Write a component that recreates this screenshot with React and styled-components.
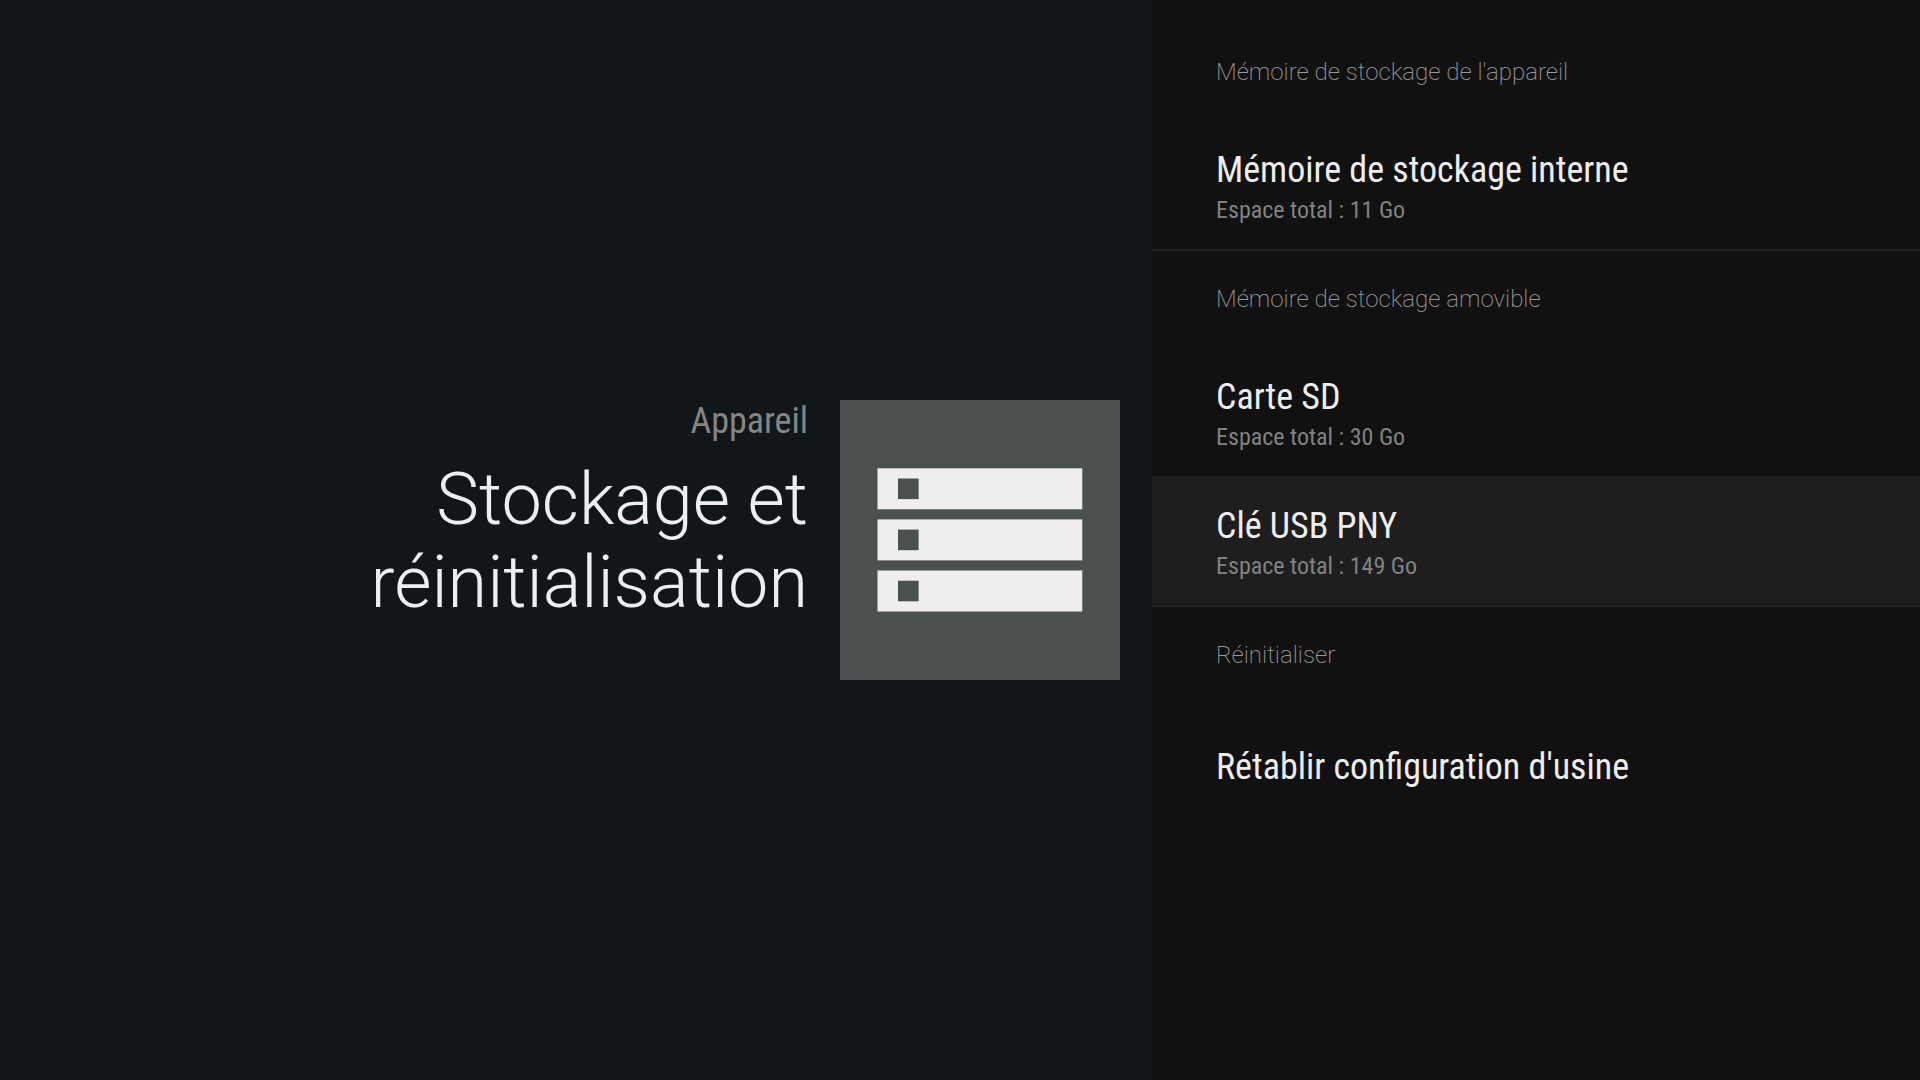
import React from "react";
import styled, { createGlobalStyle } from "styled-components";

const Global = createGlobalStyle`
  * { box-sizing: border-box; }
  body { margin: 0; background: #111719; font-family: Roboto, sans-serif; }
`;

const Screen = styled.main`
  display: grid;
  grid-template-columns: 3fr 2fr;
  min-height: 100vh;
`;

const Guidance = styled.section`
  display: flex;
  align-items: center;
  justify-content: flex-end;
  padding: 0 32px;
  background: #111719;
`;

const Summary = styled.div`
  display: flex;
  align-items: flex-start;
  gap: 32px;
`;

const Heading = styled.div`
  display: flex;
  flex-direction: column;
  align-items: flex-end;
  gap: 16px;
  max-width: 480px;
  text-align: right;
`;

const Breadcrumb = styled.p`
  margin: 0;
  color: #848686;
  font: 400 36px/42px "Roboto Condensed", Roboto, sans-serif;
`;

const Title = styled.h1`
  margin: 0;
  color: #eeeeee;
  font-size: 72px;
  font-weight: 300;
  line-height: 83px;
`;

const IconTile = styled.div`
  display: flex;
  flex: none;
  background: #4b5050;
`;

const Panel = styled.nav`
  padding-top: 24px;
  background: #111111;
`;

const Group = styled.section`
  display: flex;
  flex-direction: column;
  gap: 1px;
  padding-bottom: 1px;
  border-bottom: 2px solid ${(p) => (p.$last ? "transparent" : "#262626")};
`;

const GroupTitle = styled.h2`
  margin: 0;
  padding: 2px 64px 0;
  color: #999999;
  font-size: 24px;
  font-weight: 200;
  line-height: 93px;
`;

const Row = styled.button`
  display: flex;
  flex-direction: column;
  justify-content: center;
  width: 100%;
  height: 128px;
  padding: 0 64px;
  border: 0;
  background: ${(p) => (p.$focused ? "#1e1e1e" : "transparent")};
  text-align: left;
`;

const RowTitle = styled.span`
  color: #eeeeee;
  font: 400 36px/52px "Roboto Condensed", Roboto, sans-serif;
`;

const RowNote = styled.span`
  color: #828282;
  font: 400 24px/28px "Roboto Condensed", Roboto, sans-serif;
`;

const groups = [
  {
    title: "Mémoire de stockage de l'appareil",
    rows: [{ title: "Mémoire de stockage interne", note: "Espace total : 11 Go" }],
  },
  {
    title: "Mémoire de stockage amovible",
    rows: [
      { title: "Carte SD", note: "Espace total : 30 Go" },
      { title: "Clé USB PNY", note: "Espace total : 149 Go", focused: true },
    ],
  },
  { title: "Réinitialiser", rows: [{ title: "Rétablir configuration d'usine" }] },
];

function StorageIcon() {
  return (
    <svg width="280" height="280" viewBox="0 0 280 280" aria-hidden="true">
      {[68.3, 119.4, 170.5].map((y) => (
        <g key={y}>
          <rect x="37.5" y={y} width="204.8" height="41" fill="#eeeeee" />
          <rect x="58" y={y + 10.2} width="20.6" height="20.6" fill="#4b5050" />
        </g>
      ))}
    </svg>
  );
}

export default function App() {
  return (
    <>
      <Global />
      <Screen>
        <Guidance>
          <Summary>
            <Heading>
              <Breadcrumb>Appareil</Breadcrumb>
              <Title>Stockage et réinitialisation</Title>
            </Heading>
            <IconTile>
              <StorageIcon />
            </IconTile>
          </Summary>
        </Guidance>
        <Panel>
          {groups.map((group, i) => (
            <Group key={group.title} $last={i === groups.length - 1}>
              <GroupTitle>{group.title}</GroupTitle>
              {group.rows.map((row) => (
                <Row key={row.title} type="button" $focused={row.focused}>
                  <RowTitle>{row.title}</RowTitle>
                  {row.note && <RowNote>{row.note}</RowNote>}
                </Row>
              ))}
            </Group>
          ))}
        </Panel>
      </Screen>
    </>
  );
}
